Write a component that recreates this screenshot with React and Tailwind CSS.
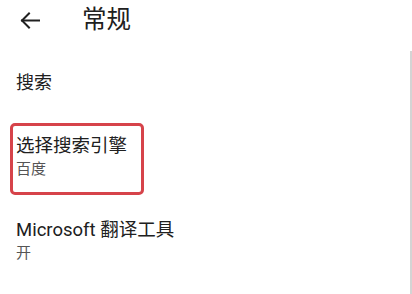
const font = { fontFamily: 'Roboto, "Noto Sans CJK SC", "Noto Sans", sans-serif' };

const BackArrow = () => (
    <svg width="20" height="17" viewBox="0 0 20 17" fill="none" stroke="#202020" strokeWidth="2" strokeLinecap="square" className="ml-[20px]">
        <path d="M2 8.5H19" />
        <path d="M9 1.5L2 8.5L9 15.5" />
    </svg>
);

const App = () => {
    return (
        <div className="relative w-[412px] h-[294px] overflow-hidden bg-white text-[#202020]" style={font}>
            {/* Header */}
            <div className="flex items-center h-[41px]">
                <BackArrow />
                <h1 className="ml-[42px] text-[24.5px] leading-none">常规</h1>
            </div>

            {/* Section label */}
            <div className="mt-[32px] px-4 text-[18px] leading-[20px]">搜索</div>

            {/* Selected item */}
            <div className="mt-[30px] ml-[10px] w-[134px] h-[72px] border-[3px] border-[#d6434a] rounded-[5px] pl-[3px] pt-[8px]">
                <div className="text-[18.5px] leading-[24px]">选择搜索引擎</div>
                <div className="text-[15px] leading-[22px] text-[#555]">百度</div>
            </div>

            {/* Translator */}
            <div className="mt-[23px] px-4">
                <div className="text-[18.5px] leading-[24px]">Microsoft 翻译工具</div>
                <div className="text-[15px] leading-[22px] text-[#555]">开</div>
            </div>

            {/* Scrollbar */}
            <div className="absolute right-0 top-[51px] bottom-0 w-[2px] bg-[#d4d4d4]" />
        </div>
    );
};

export default App;
